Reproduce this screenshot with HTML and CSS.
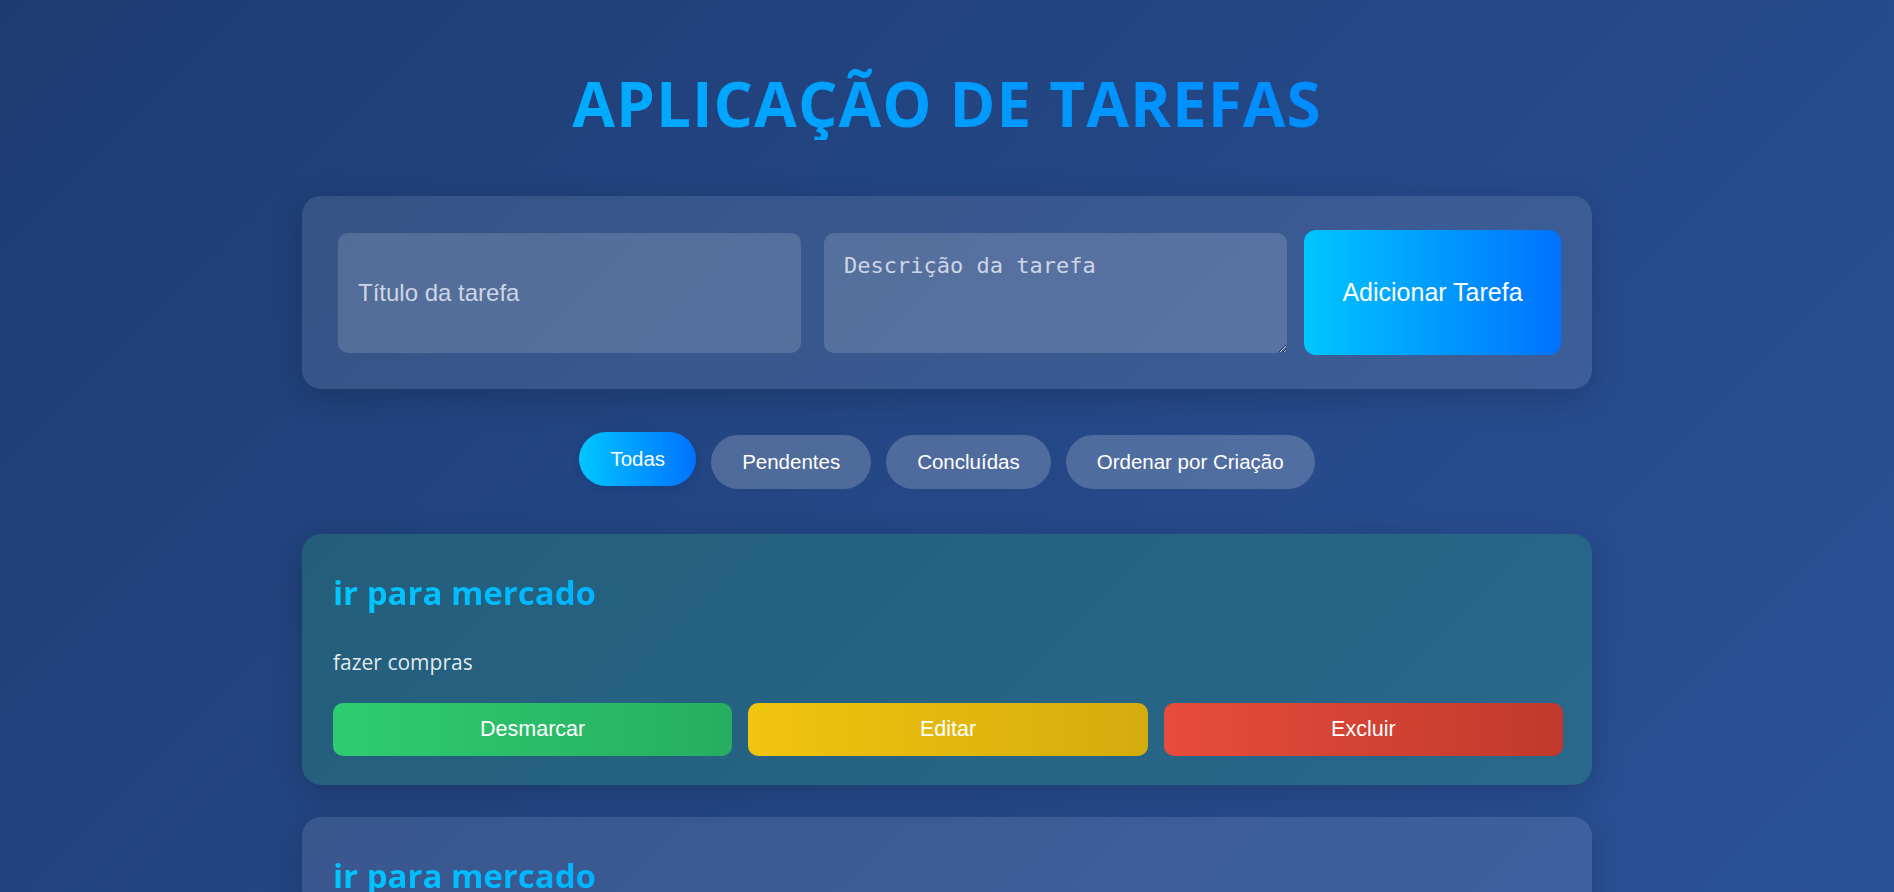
FILE: index.html
```html
<!DOCTYPE html>
<html lang="pt-BR">
<head>
<meta charset="UTF-8">
<title>Aplicação de Tarefas</title>
<link rel="stylesheet" href="styles.css">
</head>
<body>
<div class="app">
  <h1 class="app-title">APLICAÇÃO DE TAREFAS</h1>

  <form class="task-form">
    <input class="field field-title" type="text" placeholder="Título da tarefa">
    <textarea class="field field-desc" placeholder="Descrição da tarefa"></textarea>
    <button type="button" class="add-btn">Adicionar Tarefa</button>
  </form>

  <div class="filters">
    <button class="filter active">Todas</button>
    <button class="filter">Pendentes</button>
    <button class="filter">Concluídas</button>
    <button class="filter">Ordenar por Criação</button>
  </div>

  <div class="task-list">
    <div class="task done">
      <h3 class="task-title">ir para mercado</h3>
      <p class="task-desc">fazer compras</p>
      <div class="task-actions">
        <button class="act act-toggle">Desmarcar</button>
        <button class="act act-edit">Editar</button>
        <button class="act act-delete">Excluir</button>
      </div>
    </div>
    <div class="task">
      <h3 class="task-title">ir para mercado</h3>
      <p class="task-desc">fazer compras</p>
      <div class="task-actions">
        <button class="act act-toggle">Concluir</button>
        <button class="act act-edit">Editar</button>
        <button class="act act-delete">Excluir</button>
      </div>
    </div>
  </div>
</div>
</body>
</html>
```

FILE: styles.css
```css
html {
  scrollbar-width: none;
  background: #1e3c72;
}
html::-webkit-scrollbar { display: none; }

body {
  margin: 0;
  min-height: 100vh;
  background: linear-gradient(135deg, #1e3c72 0%, #2a5298 100%);
  background-attachment: fixed;
  font-family: "Open Sans", "Noto Sans", sans-serif;
  color: #fff;
}

.app {
  width: 1290px;
  margin: 0 auto;
  padding-top: 66px;
}

.app-title {
  margin: 0 -302px 56px;
  font-family: "Open Sans", sans-serif;
  font-weight: 700;
  font-size: 62px;
  line-height: 74px;
  letter-spacing: 1px;
  text-align: center;
  background: linear-gradient(90deg, #00c6ff, #0072ff);
  -webkit-background-clip: text;
  background-clip: text;
  color: transparent;
}

.task-form {
  display: flex;
  align-items: center;
  gap: 17px;
  padding: 34px 31px 34px 36px;
  background: rgba(255, 255, 255, 0.1);
  border-radius: 19px;
  box-shadow: 0 8px 32px rgba(0, 0, 0, 0.18);
}

.field {
  box-sizing: border-box;
  width: 463px;
  height: 120px;
  border: none;
  border-radius: 10px;
  background: rgba(255, 255, 255, 0.15);
  color: #fff;
  font-size: 22px;
  outline: none;
}

.field::placeholder {
  color: rgba(232, 238, 248, 0.82);
}

.field-title {
  padding: 0 20px;
  margin-right: 6px;
  font-family: "Liberation Sans", Arial, sans-serif;
  font-size: 24px;
}

.field-desc {
  padding: 20px;
  font-family: "DejaVu Sans Mono", "Liberation Mono", monospace;
  resize: vertical;
}

.add-btn {
  width: 257px;
  height: 125px;
  border: none;
  border-radius: 12px;
  background: linear-gradient(90deg, #00c6ff, #0072ff);
  color: #fff;
  font-family: "Liberation Sans", Arial, sans-serif;
  font-size: 25px;
  cursor: pointer;
}

.filters {
  display: flex;
  justify-content: center;
  gap: 15px;
  margin: 46px 0 45px;
}

.filter {
  padding: 15px 31px;
  border: none;
  border-radius: 27px;
  background: rgba(255, 255, 255, 0.2);
  color: #fff;
  font-family: "Liberation Sans", Arial, sans-serif;
  font-size: 20.5px;
  line-height: 24px;
  cursor: pointer;
}

.filter.active {
  background: linear-gradient(90deg, #00c6ff, #0072ff);
  transform: translateY(-3px);
  box-shadow: 0 3px 8px rgba(0, 40, 120, 0.2);
}

.task-list {
  display: flex;
  flex-direction: column;
  gap: 32px;
}

.task {
  padding: 30px 29px 29px 31px;
  border-radius: 19px;
  background: rgba(255, 255, 255, 0.1);
  box-shadow: 0 8px 32px rgba(0, 0, 0, 0.18);
}

.task.done {
  background: rgba(46, 204, 113, 0.2);
}

.task-title {
  margin: 9px 0 0;
  font-size: 33px;
  line-height: 40px;
  font-weight: 700;
  background: linear-gradient(90deg, #00c6ff, #0072ff);
  -webkit-background-clip: text;
  background-clip: text;
  color: transparent;
}

.task-desc {
  margin: 34px 0 0;
  font-size: 21px;
  line-height: 30px;
  color: rgba(255, 255, 255, 0.88);
}

.task-actions {
  display: flex;
  gap: 16px;
  margin-top: 26px;
}

.act {
  flex: 1;
  height: 53px;
  border: none;
  border-radius: 10px;
  color: #fff;
  font-family: "Liberation Sans", Arial, sans-serif;
  font-size: 21.5px;
  cursor: pointer;
}

.act-toggle { background: linear-gradient(90deg, #2ecc71, #27ae60); }
.act-edit { background: linear-gradient(90deg, #f1c40f, #d4ac0d); }
.act-delete { background: linear-gradient(90deg, #e74c3c, #c0392b); }
```
